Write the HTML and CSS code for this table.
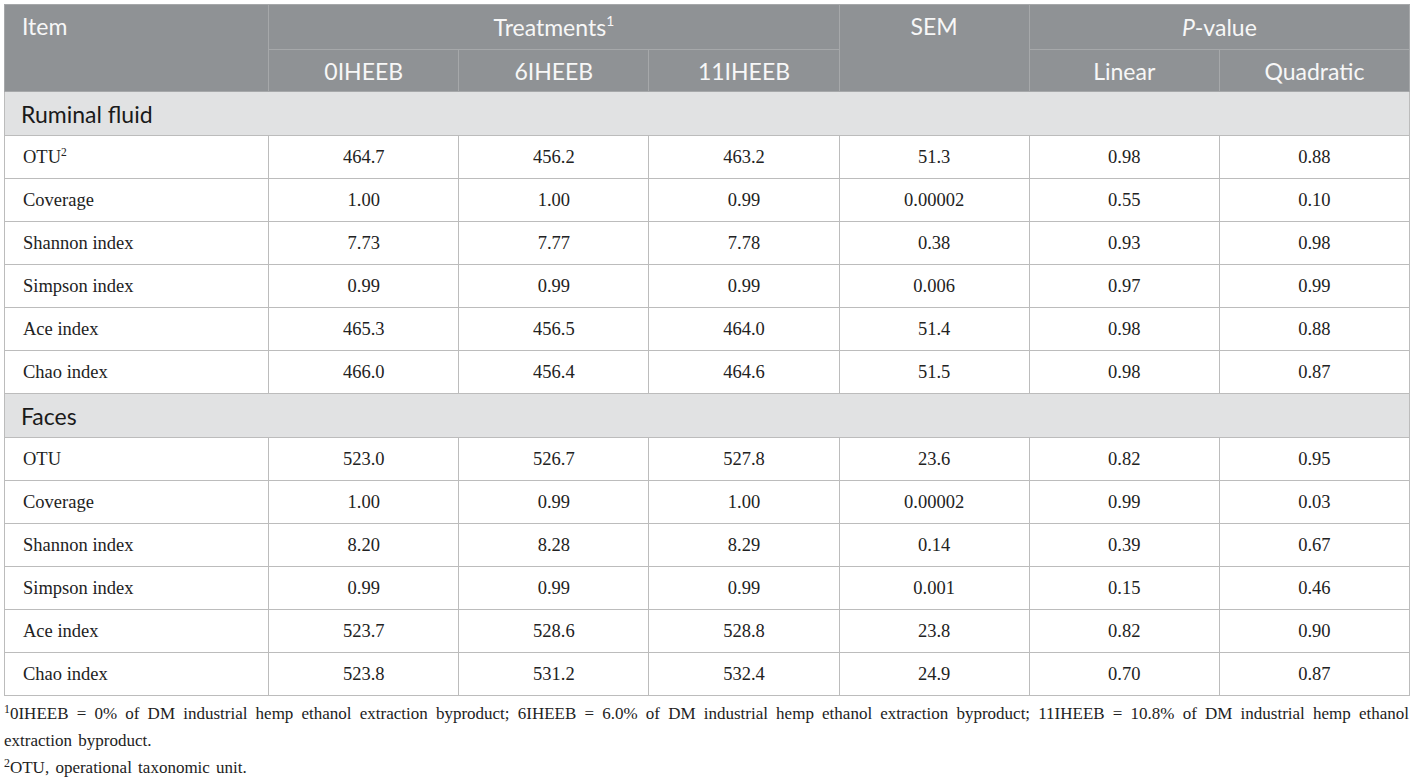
FILE: index.html
```html
<!DOCTYPE html>
<html>
<head>
<meta charset="utf-8">
<link rel="stylesheet" href="styles.css">
</head>
<body>
<table class="tbl">
  <colgroup>
    <col class="c0"><col class="cn"><col class="cn"><col class="cn"><col class="cn"><col class="cn"><col class="cn">
  </colgroup>
  <thead>
    <tr class="h1">
      <th rowspan="2" class="left top">Item</th>
      <th colspan="3">Treatments<sup>1</sup></th>
      <th rowspan="2" class="top">SEM</th>
      <th colspan="2"><i>P</i>-value</th>
    </tr>
    <tr class="h2">
      <th>0IHEEB</th><th>6IHEEB</th><th>11IHEEB</th><th>Linear</th><th>Quadratic</th>
    </tr>
  </thead>
  <tbody>
    <tr class="sec"><td colspan="7">Ruminal fluid</td></tr>
    <tr><td class="left">OTU<sup>2</sup></td><td>464.7</td><td>456.2</td><td>463.2</td><td>51.3</td><td>0.98</td><td>0.88</td></tr>
    <tr><td class="left">Coverage</td><td>1.00</td><td>1.00</td><td>0.99</td><td>0.00002</td><td>0.55</td><td>0.10</td></tr>
    <tr><td class="left">Shannon index</td><td>7.73</td><td>7.77</td><td>7.78</td><td>0.38</td><td>0.93</td><td>0.98</td></tr>
    <tr><td class="left">Simpson index</td><td>0.99</td><td>0.99</td><td>0.99</td><td>0.006</td><td>0.97</td><td>0.99</td></tr>
    <tr><td class="left">Ace index</td><td>465.3</td><td>456.5</td><td>464.0</td><td>51.4</td><td>0.98</td><td>0.88</td></tr>
    <tr><td class="left">Chao index</td><td>466.0</td><td>456.4</td><td>464.6</td><td>51.5</td><td>0.98</td><td>0.87</td></tr>
    <tr class="sec"><td colspan="7">Faces</td></tr>
    <tr><td class="left">OTU</td><td>523.0</td><td>526.7</td><td>527.8</td><td>23.6</td><td>0.82</td><td>0.95</td></tr>
    <tr><td class="left">Coverage</td><td>1.00</td><td>0.99</td><td>1.00</td><td>0.00002</td><td>0.99</td><td>0.03</td></tr>
    <tr><td class="left">Shannon index</td><td>8.20</td><td>8.28</td><td>8.29</td><td>0.14</td><td>0.39</td><td>0.67</td></tr>
    <tr><td class="left">Simpson index</td><td>0.99</td><td>0.99</td><td>0.99</td><td>0.001</td><td>0.15</td><td>0.46</td></tr>
    <tr><td class="left">Ace index</td><td>523.7</td><td>528.6</td><td>528.8</td><td>23.8</td><td>0.82</td><td>0.90</td></tr>
    <tr><td class="left">Chao index</td><td>523.8</td><td>531.2</td><td>532.4</td><td>24.9</td><td>0.70</td><td>0.87</td></tr>
  </tbody>
</table>
<div class="notes">
  <p><sup>1</sup>0IHEEB = 0% of DM industrial hemp ethanol extraction byproduct; 6IHEEB = 6.0% of DM industrial hemp ethanol extraction byproduct; 11IHEEB = 10.8% of DM industrial hemp ethanol extraction byproduct.</p>
  <p><sup>2</sup>OTU, operational taxonomic unit.</p>
</div>
</body>
</html>
```

FILE: styles.css
```css
html, body {
  margin: 0;
  padding: 0;
  background: #ffffff;
}
body {
  padding: 4px 5px 0 4px;
}
.tbl {
  border-collapse: collapse;
  table-layout: fixed;
  width: 1406px;
  border: 1px solid #b7c4bf;
}
.c0 { width: 264px; }
.cn { width: 190px; }
.tbl th {
  background: #8f9295;
  color: #f7f7f7;
  font-family: "Lato", "Open Sans", sans-serif;
  font-weight: 400;
  font-size: 23px;
  text-align: center;
  border: 1px solid #a6a8aa;
  padding: 0;
}
.tbl th.left { text-align: left; padding-left: 17px; }
.tbl th.top { vertical-align: top; padding-top: 7px; }
.tbl .h1 th { height: 44px; }
.tbl .h2 th { height: 41px; }
.tbl sup {
  font-size: 0.6em;
  vertical-align: 0.7em;
  line-height: 0;
}
.tbl td {
  font-family: "Liberation Serif", "Times New Roman", serif;
  font-size: 18.5px;
  color: #222;
  text-align: center;
  height: 42px;
  padding: 0;
  border: 1px solid #bcbcbc;
}
.tbl td.left { text-align: left; padding-left: 18px; }
.tbl td sup { font-size: 0.62em; vertical-align: 0.6em; }
.tbl .sec td {
  background: #e1e2e3;
  font-family: "Lato", "Open Sans", sans-serif;
  font-size: 23px;
  color: #1a1a1a;
  text-align: left;
  padding-left: 16px;
  height: 43px;
}
.notes {
  font-family: "Liberation Serif", "Times New Roman", serif;
  font-size: 17px;
  word-spacing: 2px;
  color: #222;
  line-height: 27px;
  margin-top: 4px;
  text-align: justify;
}
.notes p { margin: 0; }
.notes sup {
  font-size: 0.7em;
  vertical-align: 0.5em;
  line-height: 0;
}
```
